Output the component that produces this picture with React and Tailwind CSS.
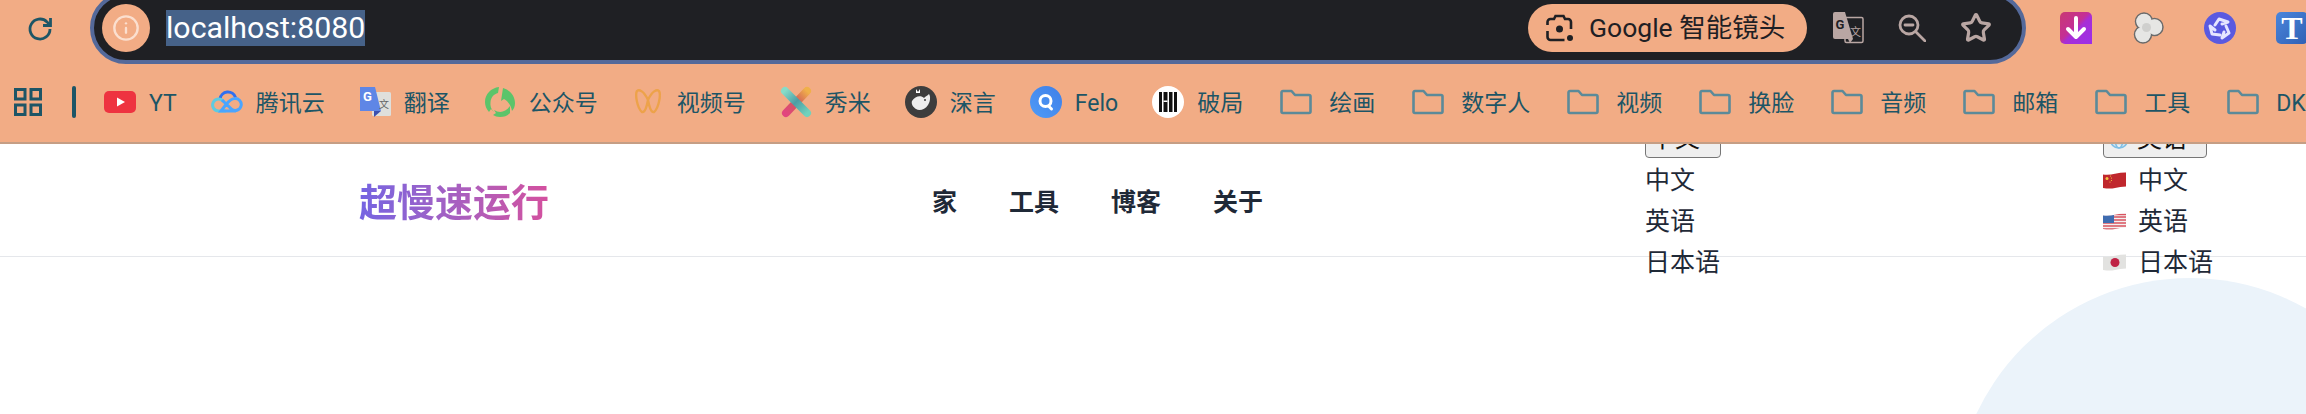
import { Info, Star } from 'lucide-react';

const AppsIcon = () => (
  <svg viewBox="0 0 28 28" className="w-7 h-7" fill="none" stroke="#1d5566" strokeWidth="3">
    <rect x="1.5" y="1.5" width="9.5" height="9.5" />
    <rect x="17" y="1.5" width="9.5" height="9.5" />
    <rect x="1.5" y="17" width="9.5" height="9.5" />
    <rect x="17" y="17" width="9.5" height="9.5" />
  </svg>
);

const YouTubeIcon = () => (
  <svg viewBox="0 0 32 32" className="w-8 h-8">
    <rect x="0" y="5" width="32" height="22" rx="5" fill="#ee3340" />
    <path d="M13 11.5l8 4.5-8 4.5z" fill="#fff" />
  </svg>
);

const TencentIcon = () => (
  <svg viewBox="0 0 32 32" className="w-8 h-8" fill="none" strokeWidth="3">
    <path d="M9 13a8 8 0 0 1 15.500-1.500" stroke="#2f6ff0" />
    <path d="M12.500 15.500A6 6 0 1 0 8 25h7" stroke="#5ecbe0" />
    <path d="M11 14l10 9.500a6 6 0 1 0 2.500-11c-3 0-5 2-8.500 6l-5 6.500h15" stroke="#4aa5ff" />
  </svg>
);

const GoogleTranslateIcon = () => (
  <svg viewBox="0 0 32 32" className="w-8 h-8">
    <rect x="13" y="6" width="19" height="24" rx="1.500" fill="#dfdfdc" />
    <path d="M1 1h15l6 24H1z" fill="#5f86e6" />
    <path d="M15 25h7l-7 6z" fill="#3c4fb0" />
    <text x="4" y="15" fontSize="13" fontWeight="700" fill="#fff" fontFamily="Roboto, sans-serif">G</text>
    <text x="20" y="22" fontSize="10" fill="#666" fontFamily="'Noto Sans CJK SC', sans-serif">文</text>
  </svg>
);

const WechatMpIcon = () => (
  <svg viewBox="0 0 32 32" className="w-8 h-8" fill="#5cc46a">
    <path d="M15 1C7 2 1 8 1 16c0 4 1.500 7 4 10l2-3 3 3c-3-3-4-6-3.500-10C7 11 10 8 14 7z" />
    <path d="M19 2c7 2 12 8 12 15 0 3-1 6-3 8-1-5-3-9-8-12l-3 2z" />
    <path d="M26 27c-3 3-6 4-10 4-3 0-5-1-7-2l3-2-2-3c5 3 11 3 16-4z" />
  </svg>
);

const ChannelsIcon = () => (
  <svg viewBox="0 0 32 32" className="w-8 h-8" fill="none" stroke="#eda24a" strokeWidth="2.400">
    <path d="M16 14C12 5 7 3 5 5c-2 3 0 17 5 21 3 1 5-6 6-12 1 6 3 13 6 12 5-4 7-18 5-21-2-2-7 0-11 9z" />
  </svg>
);

const XiumiIcon = () => (
  <svg viewBox="0 0 32 32" className="w-8 h-8" fill="none" strokeWidth="8" strokeLinecap="round">
    <defs>
      <linearGradient id="xm-a" x1="1" y1="0" x2="0" y2="1">
        <stop offset="0" stopColor="#f0b04a" />
        <stop offset="0.5" stopColor="#cf5a5a" />
        <stop offset="1" stopColor="#e2457e" />
      </linearGradient>
      <linearGradient id="xm-b" x1="0" y1="0" x2="1" y2="1">
        <stop offset="0" stopColor="#86dcc8" />
        <stop offset="0.5" stopColor="#4c9da4" />
        <stop offset="1" stopColor="#72d2bc" />
      </linearGradient>
    </defs>
    <path d="M27 5L6 27" stroke="url(#xm-a)" />
    <path d="M5 5l22 22" stroke="url(#xm-b)" />
  </svg>
);

const ShenyanIcon = () => (
  <svg viewBox="0 0 32 32" className="w-8 h-8">
    <circle cx="16" cy="16" r="16" fill="#3d3d3d" />
    <path d="M7 15c3-5 9-6 12-3 2-2 3-2 5-4 2 3 1 8-1 11-3 5-9 6-12 4-3-2-5-5-4-8z" fill="#eee" />
    <path d="M11 3l2 3 2-3v4h-4z" fill="#fff" />
    <circle cx="20" cy="14" r="1" fill="#3d3d3d" />
  </svg>
);

const FeloIcon = () => (
  <svg viewBox="0 0 32 32" className="w-8 h-8" fill="none">
    <defs>
      <linearGradient id="felo" x1="0" y1="1" x2="1" y2="0">
        <stop offset="0" stopColor="#4f9bf7" />
        <stop offset="1" stopColor="#3f7fe8" />
      </linearGradient>
    </defs>
    <circle cx="16" cy="16" r="16" fill="url(#felo)" />
    <circle cx="15.500" cy="15" r="5.500" stroke="#fff" strokeWidth="3" />
    <path d="M18.500 20l3 3" stroke="#fff" strokeWidth="3" strokeLinecap="round" />
  </svg>
);

const PojuIcon = () => (
  <svg viewBox="0 0 32 32" className="w-8 h-8">
    <circle cx="16" cy="16" r="16" fill="#fff" />
    <rect x="7" y="6" width="18" height="20" fill="#111" />
    <rect x="10" y="6" width="1.500" height="20" fill="#fff" />
    <rect x="11.500" y="14.500" width="4" height="1.500" fill="#fff" />
    <rect x="15.500" y="6" width="1.500" height="20" fill="#fff" />
    <rect x="20.500" y="6" width="1.500" height="20" fill="#fff" />
  </svg>
);

const FolderIcon = () => (
  <svg viewBox="0 0 32 32" className="w-8 h-8" fill="none" stroke="#5b8a99" strokeWidth="2.600" strokeLinejoin="round">
    <path d="M1.500 6.500a1.500 1.500 0 0 1 1.500-1.500h8.500l3.500 4h14a1.500 1.500 0 0 1 1.500 1.500v15a1.500 1.500 0 0 1-1.500 1.500H3a1.500 1.500 0 0 1-1.500-1.500z" />
  </svg>
);

const bookmarks = [
  { label: 'YT', icon: <YouTubeIcon /> },
  { label: '腾讯云', icon: <TencentIcon /> },
  { label: '翻译', icon: <GoogleTranslateIcon /> },
  { label: '公众号', icon: <WechatMpIcon /> },
  { label: '视频号', icon: <ChannelsIcon /> },
  { label: '秀米', icon: <XiumiIcon /> },
  { label: '深言', icon: <ShenyanIcon /> },
  { label: 'Felo', icon: <FeloIcon /> },
  { label: '破局', icon: <PojuIcon /> },
];

const folders = ['绘画', '数字人', '视频', '换脸', '音频', '邮箱', '工具', 'DK'];

const LensIcon = () => (
  <svg viewBox="0 0 28 28" className="w-7 h-7" fill="none" stroke="#1f2024" strokeWidth="2.600">
    <path d="M1.500 11V8a3 3 0 0 1 3-3h3.500l1.500-3h8l1.500 3h3a3 3 0 0 1 3 3v7" />
    <path d="M1.500 17v6a3 3 0 0 0 3 3h14" />
    <circle cx="13.500" cy="15" r="3.500" fill="#1f2024" stroke="none" />
    <circle cx="24" cy="24" r="3" fill="#1f2024" stroke="none" />
  </svg>
);

const TranslateIcon = () => (
  <svg viewBox="0 0 32 32" className="w-8 h-8">
    <rect x="13" y="5.500" width="18" height="25" rx="1.500" fill="none" stroke="#b9a6a3" strokeWidth="1.500" />
    <path d="M1 2a2 2 0 0 1 2-2h10l8 27H3a2 2 0 0 1-2-2z" fill="#b9a6a3" />
    <path d="M16 27h5l-3 4z" fill="#b9a6a3" />
    <text x="3.500" y="17" fontSize="13" fontWeight="700" fill="#1f2024" fontFamily="Roboto, sans-serif">G</text>
    <text x="18" y="24" fontSize="11" fill="#b9a6a3" fontFamily="'Noto Sans CJK SC', sans-serif">文</text>
  </svg>
);

const ZoomOutIcon = () => (
  <svg viewBox="0 0 28 28" className="w-7 h-7" fill="none" stroke="#b9a6a3" strokeWidth="2.800" strokeLinecap="round">
    <circle cx="11" cy="11" r="9" />
    <path d="M7 11h8M18 18l9 9" />
  </svg>
);

const DownloadExt = () => (
  <svg viewBox="0 0 32 32" className="w-8 h-8 shrink-0">
    <defs>
      <linearGradient id="dl" x1="0" y1="0" x2="1" y2="1">
        <stop offset="0" stopColor="#c93a72" />
        <stop offset="0.45" stopColor="#c42f96" />
        <stop offset="0.55" stopColor="#a72ed6" />
        <stop offset="1" stopColor="#9c2fe8" />
      </linearGradient>
    </defs>
    <path d="M5 0h22a5 5 0 0 1 5 5v27H5a5 5 0 0 1-5-5V5a5 5 0 0 1 5-5z" fill="url(#dl)" />
    <path d="M16 6v18M8 17l8 8 8-8" fill="none" stroke="#fff" strokeWidth="4" strokeLinecap="round" strokeLinejoin="round" />
  </svg>
);

const CirclesExt = () => (
  <svg viewBox="0 0 32 32" className="w-8 h-8 shrink-0" fill="#e0e0de">
    <g stroke="#6b6b6b" strokeWidth="1.500">
      <circle cx="12" cy="9.500" r="8.500" />
      <circle cx="22.500" cy="15" r="8.500" />
      <circle cx="11" cy="22.500" r="8.500" />
    </g>
    <circle cx="12" cy="9.500" r="7.500" fill="#e6e6e4" />
    <circle cx="22.500" cy="15" r="7.500" fill="#e6e6e4" />
    <circle cx="11" cy="22.500" r="7.500" fill="#e6e6e4" />
    <circle cx="14.500" cy="15.500" r="4.500" fill="#cfcfcd" />
  </svg>
);

const SwirlExt = () => (
  <svg viewBox="0 0 32 32" className="w-8 h-8 shrink-0" fill="none" stroke="#e6e6ff" strokeWidth="3" strokeLinejoin="round" strokeLinecap="round">
    <circle cx="16" cy="16" r="16" fill="#5a5ae0" stroke="none" />
    <path d="M11 13l4-6 9 3-6 2" />
    <path d="M22 14l3 7-7 5 2-6" />
    <path d="M16 23l-8-1-2-8 5 4" />
  </svg>
);

const TypeExt = () => (
  <div className="w-8 h-8 shrink-0 rounded-[5px] bg-linear-to-br from-[#4a86dc] to-[#3160b4] flex items-center justify-center text-white text-[32px] leading-none font-bold font-['Liberation_Serif',serif]">
    T
  </div>
);

const Flag = ({ id, children }) => (
  <svg viewBox="0 0 23 17" className="w-[23px] h-[17px] shrink-0">
    <defs>
      <clipPath id={id}>
        <path d="M0 2.500Q6 3.200 12 1.800T23 .5V14.500Q17 14.800 12 16T0 16z" />
      </clipPath>
    </defs>
    <g clipPath={`url(#${id})`}>{children}</g>
  </svg>
);

const ChinaFlag = () => (
  <Flag id="cn">
    <rect width="23" height="17" fill="#c0272d" />
    <circle cx="4" cy="6.500" r="1.500" fill="#f4c542" />
    <circle cx="7.500" cy="4" r=".6" fill="#f4c542" />
    <circle cx="8.500" cy="6" r=".6" fill="#f4c542" />
    <circle cx="8.500" cy="8.500" r=".6" fill="#f4c542" />
    <circle cx="7" cy="10" r=".6" fill="#f4c542" />
  </Flag>
);

const UsFlag = () => (
  <Flag id="us">
    <rect width="23" height="17" fill="#f3f1f1" />
    <path d="M0 4h23M0 7h23M0 10h23M0 13h23M0 16h23M0 1.500h23" stroke="#d9535f" strokeWidth="1.300" />
    <rect width="11" height="10" fill="#3f6cb0" />
  </Flag>
);

const JapanFlag = () => (
  <Flag id="jp">
    <rect width="23" height="17" fill="#e2e2e0" />
    <circle cx="12" cy="8.500" r="4.500" fill="#bf2244" />
  </Flag>
);

const GlobeIcon = () => (
  <svg viewBox="0 0 20 20" className="w-5 h-5" fill="none" stroke="#7fbfe6" strokeWidth="1.500">
    <circle cx="10" cy="10" r="9" />
    <ellipse cx="10" cy="10" rx="4" ry="9" />
    <path d="M1 10h18M2.500 5.500h15M2.500 14.500h15" />
  </svg>
);

const LangSelect = ({ className, children }) => (
  <div className={`h-[32px] mb-[2px] pb-[6px] flex items-center border-[1.5px] border-[#767676] rounded-[4px] bg-[#efefef] text-[#111] ${className}`}>
    {children}
    <span className="ml-auto text-[13px] font-['DejaVu_Sans',sans-serif]">▾</span>
  </div>
);

export default function App() {
  return (
    <div className="relative h-[414px] overflow-hidden bg-white font-['Roboto','Noto_Sans_CJK_SC',sans-serif]">
      {/* browser chrome */}
      <div className="relative z-10 h-[144px] bg-[#f2ac85] border-b-2 border-[#c59e85]">
        <div className="h-[64px] flex items-end">
          <div className="w-[90px] h-[64px] shrink-0 pl-[26px] pt-[15px]">
            <svg viewBox="0 0 28 28" className="w-7 h-7" fill="none" stroke="#1d5566" strokeWidth="2.800">
              <path d="M24 14a10 10 0 1 1-3-7.100L24 10" />
              <path d="M24.500 3v7.500H17" />
            </svg>
          </div>
          <div className="w-[1936px] h-[72px] shrink-0 rounded-[36px] border-4 border-[#54699a] bg-[#1f2024] flex items-center pl-2">
            <div className="w-12 h-12 rounded-full bg-[#f2ac85] flex items-center justify-center shrink-0">
              <Info className="w-7 h-7 text-[#fbdfcf]" strokeWidth={2} />
            </div>
            <span className="ml-4 h-9 leading-9 bg-[#466289] text-white text-[30.300px]">localhost:8080</span>
            <div className="ml-auto h-12 w-[279px] rounded-full bg-[#f2ac85] flex items-center pl-[18px] gap-[15px] text-[#1f2024] text-[26.500px] whitespace-nowrap">
              <LensIcon />
              <span>Google 智能镜头</span>
            </div>
            <div className="ml-[25px] mr-[30px] flex items-center gap-[34px]">
              <TranslateIcon />
              <ZoomOutIcon />
              <Star className="w-8 h-8 text-[#b9a6a3]" strokeWidth={2.4} />
            </div>
          </div>
          <div className="ml-[34px] h-[64px] pt-[12px] shrink-0 flex items-start gap-10">
            <DownloadExt />
            <CirclesExt />
            <SwirlExt />
            <TypeExt />
          </div>
        </div>
        <div className="h-[76px] flex items-center pl-[14px] text-[23px] text-[#1d5566] whitespace-nowrap">
          <AppsIcon />
          <div className="ml-[30px] w-1 h-8 rounded-full bg-[#1d5566]" />
          <div className="ml-7 flex items-center gap-[34px]">
            {bookmarks.map((item) => (
              <div key={item.label} className="flex items-center gap-[13px]">
                {item.icon}
                <span className="mt-1">{item.label}</span>
              </div>
            ))}
          </div>
          <div className="ml-[37px] flex items-center gap-[37px]">
            {folders.map((name) => (
              <div key={name} className="flex items-center gap-[17px]">
                <FolderIcon />
                <span className="mt-1">{name}</span>
              </div>
            ))}
          </div>
        </div>
      </div>

      {/* page header */}
      <header className="h-[113px] pt-[6px] border-b border-[#e5e7eb] flex items-center pl-[359px] text-[#1f2937]">
        <div className="w-[573px] shrink-0">
          <span className="text-[38px] font-bold bg-linear-to-r from-[#7464e2] to-[#d44f9e] bg-clip-text text-transparent">超慢速运行</span>
        </div>
        <nav className="w-[713px] shrink-0 flex gap-[52px] text-[25px] font-semibold text-[#1f2937]">
          <span>家</span>
          <span>工具</span>
          <span>博客</span>
          <span>关于</span>
        </nav>
        <div className="w-[458px] shrink-0 mt-[2px] text-[25px] leading-[41px]">
          <LangSelect className="w-[76px] pl-1 pr-[6px]">
            <span>中文</span>
          </LangSelect>
          <ul>
            <li>中文</li>
            <li>英语</li>
            <li>日本语</li>
          </ul>
        </div>
        <div className="shrink-0 mt-[2px] text-[25px] leading-[41px]">
          <LangSelect className="w-[104px] pl-[5px] pr-[6px]">
            <GlobeIcon />
            <span className="ml-2">英语</span>
          </LangSelect>
          <ul>
            <li className="flex items-center gap-3"><ChinaFlag /><span>中文</span></li>
            <li className="flex items-center gap-3"><UsFlag /><span>英语</span></li>
            <li className="flex items-center gap-3"><JapanFlag /><span>日本语</span></li>
          </ul>
        </div>
      </header>

      {/* decorative blob */}
      <div className="absolute left-[1954px] top-[278px] w-[472px] h-[472px] rounded-full bg-[#ebf3fa]" />
    </div>
  );
}
